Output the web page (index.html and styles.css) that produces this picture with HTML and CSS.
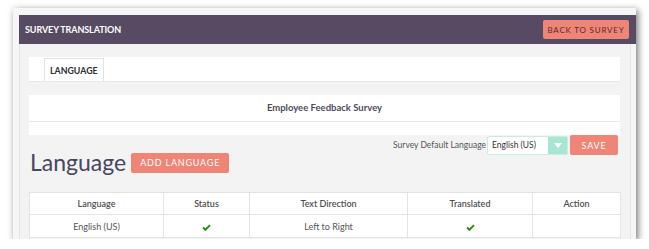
FILE: index.html
```html
<!DOCTYPE html>
<html lang="en">
<head>
    <meta charset="UTF-8">
    <meta name="viewport" content="width=device-width, initial-scale=1.0">
    <title>Survey Translation</title>
    <link rel="stylesheet" href="styles.css">
</head>
<body>
    <div class="window">
        <div class="page-header">
            <span class="page-title">SURVEY TRANSLATION</span>
            <button class="btn btn-back">BACK TO SURVEY</button>
        </div>

        <div class="panel">
            <div class="tabs">
                <div class="tab active">LANGUAGE</div>
            </div>

            <div class="survey-box">
                <div class="survey-name">Employee Feedback Survey</div>
            </div>

            <div class="lang-head">
                <div class="lang-title">
                    <h1>Language</h1>
                    <button class="btn btn-add">ADD LANGUAGE</button>
                </div>
                <div class="default-lang">
                    <label for="default-lang">Survey Default Language</label>
                    <div class="select">
                        <span class="select-value">English (US)</span>
                        <span class="select-arrow"></span>
                    </div>
                    <button class="btn btn-save">SAVE</button>
                </div>
            </div>

            <table class="lang-table">
                <colgroup>
                    <col class="c1"><col class="c2"><col class="c3"><col class="c4"><col class="c5">
                </colgroup>
                <thead>
                    <tr>
                        <th>Language</th>
                        <th>Status</th>
                        <th>Text Direction</th>
                        <th>Translated</th>
                        <th>Action</th>
                    </tr>
                </thead>
                <tbody>
                    <tr>
                        <td>English (US)</td>
                        <td><svg class="check" viewBox="0 0 10 8" width="9" height="7"><path d="M1 4 L3.8 6.6 L9 1.2" fill="none" stroke="#2c8a1c" stroke-width="2.2"/></svg></td>
                        <td>Left to Right</td>
                        <td><svg class="check" viewBox="0 0 10 8" width="9" height="7"><path d="M1 4 L3.8 6.6 L9 1.2" fill="none" stroke="#2c8a1c" stroke-width="2.2"/></svg></td>
                        <td></td>
                    </tr>
                </tbody>
            </table>
        </div>
    </div>
</body>
</html>
```

FILE: styles.css
```css
body {
    margin: 0;
    background-color: #fff;
    font-family: Lato, "Open Sans", sans-serif;
}

.window {
    margin: 8px 0 0 13px;
    width: 623px;
    height: 231px;
    padding: 7px 0 0 6px;
    box-sizing: border-box;
    background-color: #f6f6f6;
    box-shadow: 2px 2px 7px rgba(0, 0, 0, 0.55);
    overflow: hidden;
}

.page-header {
    height: 29px;
    background-color: #564b62;
    display: flex;
    align-items: center;
    justify-content: space-between;
    padding: 0 7px 0 6px;
}

.page-title {
    color: #fff;
    font-size: 9px;
    font-weight: bold;
    letter-spacing: -0.1px;
}

.btn {
    border: none;
    border-radius: 2px;
    background-color: #ef8577;
    font-family: Lato, "Open Sans", sans-serif;
    cursor: pointer;
    letter-spacing: 0.8px;
    padding: 0;
}

.btn-back {
    width: 86px;
    height: 19px;
    color: #5b2a28;
    font-size: 8px;
}

.panel {
    background-color: #f3f3f3;
    border: 1px solid #e4e4e4;
    border-top: none;
    margin-right: 5px;
    padding: 13px 10px 0 9px;
    height: 200px;
}

.tabs {
    height: 25px;
    background-color: #fff;
    border-bottom: 1px solid #e8e8e8;
    box-sizing: border-box;
    padding: 1px 0 0 15px;
    display: flex;
}

.tab {
    width: 60px;
    box-sizing: border-box;
    border: 1px solid #e2e2e2;
    border-bottom: none;
    font-size: 8.8px;
    font-weight: bold;
    color: #2d2d33;
    padding: 6px 0 0 5px;
}

.survey-box {
    margin-top: 13px;
    height: 40px;
    background-color: #fff;
}

.survey-name {
    height: 26px;
    line-height: 26px;
    border-bottom: 1px solid #e8e8e8;
    text-align: center;
    font-size: 9.5px;
    font-weight: bold;
    color: #4d4a5e;
}

.lang-head {
    display: flex;
    justify-content: space-between;
    height: 40px;
}

.lang-title {
    display: flex;
    align-items: center;
    align-self: flex-end;
    gap: 5px;
    padding-left: 1px;
}

.lang-title h1 {
    margin: 0;
    font-size: 23px;
    font-weight: normal;
    color: #48465e;
    line-height: 26px;
}

.btn-add {
    width: 98px;
    height: 20px;
    color: #fff;
    font-size: 9px;
    margin-top: 1px;
}

.default-lang {
    display: flex;
    align-items: center;
    height: 20px;
    font-size: 8.5px;
    color: #555;
    margin-right: 2px;
}

.default-lang label {
    margin-right: 1px;
}

.select {
    width: 81px;
    height: 19px;
    box-sizing: border-box;
    border: 1px solid #c7eee2;
    border-radius: 2px;
    background-color: #fff;
    display: flex;
    align-items: center;
    justify-content: space-between;
    margin-right: 2px;
}

.select-value {
    padding-left: 4px;
    color: #333;
    font-size: 8.5px;
}

.select-arrow {
    width: 19px;
    height: 17px;
    background-color: #a6e6d3;
    position: relative;
}

.select-arrow::after {
    content: "";
    position: absolute;
    left: 6px;
    top: 6px;
    border-left: 4px solid transparent;
    border-right: 4px solid transparent;
    border-top: 5px solid #fff;
}

.btn-save {
    width: 48px;
    height: 20px;
    color: #fff;
    font-size: 9px;
}

.lang-table {
    margin-top: 17px;
    width: 591px;
    table-layout: fixed;
    border-collapse: collapse;
    background-color: #fff;
    font-size: 9px;
    color: #555;
}

.lang-table th,
.lang-table td {
    border: 1px solid #e3e3e3;
    text-align: center;
    padding: 0;
}

.lang-table th {
    height: 21px;
    font-weight: 600;
    color: #4f4f4f;
}

.lang-table td {
    height: 22px;
}

.c1 { width: 134px; }
.c2 { width: 86px; }
.c3 { width: 158px; }
.c4 { width: 125px; }
.c5 { width: 88px; }

.check {
    vertical-align: middle;
}
```
